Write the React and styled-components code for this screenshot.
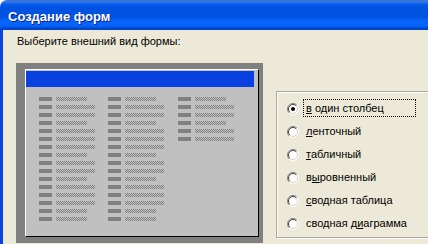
import React from "react";
import styled, { createGlobalStyle } from "styled-components";

const GlobalStyle = createGlobalStyle`
  html, body {
    margin: 0;
    padding: 0;
    background: #fff;
  }
  body {
    font-family: "Liberation Sans", Arial, sans-serif;
  }
`;

const Window = styled.div`
  width: 428px;
  height: 244px;
  overflow: hidden;
  display: flex;
  flex-direction: column;
  background: #ece9d8;
  border-top-left-radius: 7px;
`;

const TitleBar = styled.div`
  flex: none;
  height: 30px;
  box-sizing: border-box;
  padding: 3px 0 0 8px;
  display: flex;
  align-items: center;
  background: linear-gradient(
    to bottom,
    #4a70b8 0px,
    #2a7af8 2px,
    #0a5cec 4px,
    #0053e2 7px,
    #0052df 17px,
    #0865fc 21px,
    #0764fa 26px,
    #0049cc 28px,
    #0042c0 30px
  );
  color: #fff;
  font: bold 13px/15px "Liberation Sans", Arial, sans-serif;
  text-shadow: 1px 1px 0 #0a1e8a;
`;

const Body = styled.div`
  flex: 1;
  border-left: 3px solid #0843dc;
  display: flex;
  flex-direction: column;
`;

const Subtitle = styled.div`
  margin: 5px 0 0 14px;
  font-size: 11px;
  line-height: 13px;
  color: #000;
`;

const Main = styled.div`
  display: flex;
  align-items: flex-start;
  margin: 15px 0 0 13px;
`;

const PreviewFrame = styled.div`
  flex: none;
  width: 247px;
  height: 180px;
  box-sizing: border-box;
  padding: 6px 0 0 9px;
  background: #808080;
`;

const PreviewPanel = styled.div`
  width: 234px;
  height: 168px;
  box-sizing: border-box;
  background: #c0c0c0;
  border-top: 1px solid #fff;
  border-left: 1px solid #fff;
  border-right: 1px solid #000;
  border-bottom: 1px solid #000;
  display: flex;
  flex-direction: column;
`;

const FormHeader = styled.div`
  height: 16px;
  margin: 1px 4px 0 0;
  background: #0841e0;
`;

const Columns = styled.div`
  display: flex;
  margin: 10px 0 0 13px;
`;

const Column = styled.div`
  width: ${(p) => p.$w}px;
  display: flex;
  flex-direction: column;
  gap: 4px;
`;

const FieldRow = styled.div`
  display: flex;
  gap: 4px;
  height: 4px;
`;

const FieldLabel = styled.div`
  width: 13px;
  background: #808080;
`;

const Dither = ({ w }) => (
  <svg width={w} height="4" shapeRendering="crispEdges" style={{ display: "block" }}>
    <defs>
      <pattern id="dither" width="2" height="2" patternUnits="userSpaceOnUse">
        <rect x="0" y="0" width="1" height="1" fill="#808080" />
        <rect x="1" y="1" width="1" height="1" fill="#808080" />
      </pattern>
    </defs>
    <rect width={w} height="4" fill="url(#dither)" />
  </svg>
);

const OptionGroup = styled.div`
  flex: none;
  width: 170px;
  height: 147px;
  box-sizing: border-box;
  margin: 28px 0 0 13px;
  padding: 7px 0 0 10px;
  border: 1px solid #aca899;
  box-shadow: inset 1px 1px 0 #fff, 1px 1px 0 #fff;
  display: flex;
  flex-direction: column;
  gap: 5px;
`;

const Option = styled.label`
  display: flex;
  align-items: center;
  height: 18px;
  gap: 4px;
`;

const OptionText = styled.span`
  display: block;
  width: 113px;
  height: 18px;
  box-sizing: border-box;
  padding: 1px 0 0 2px;
  border: 1px dotted ${(p) => (p.$focus ? "#000" : "transparent")};
  font-size: 11px;
  line-height: 15px;
  color: #000;
  white-space: pre;
  u {
    text-decoration: underline;
    text-underline-offset: 1px;
  }
`;

const RadioIcon = ({ checked }) => (
  <svg width="12" height="12" viewBox="0 0 12 12" style={{ flex: "none", marginTop: 2 }}>
    <circle cx="6" cy="6" r="5.5" fill="#fff" />
    <path d="M2.1 9.9 A5.5 5.5 0 0 1 9.9 2.1" stroke="#808080" fill="none" />
    <path d="M9.9 2.1 A5.5 5.5 0 0 1 2.1 9.9" stroke="#fff" fill="none" />
    <path d="M2.8 9.2 A4.5 4.5 0 0 1 9.2 2.8" stroke="#404040" fill="none" />
    <path d="M9.2 2.8 A4.5 4.5 0 0 1 2.8 9.2" stroke="#d4d0c8" fill="none" />
    {checked && <circle cx="6" cy="6" r="2" fill="#000" />}
  </svg>
);

const pattern = [0, 1, 1, 0, 1, 1, 1, 0, 1, 1, 0, 1, 1, 1, 0, 0];

const columns = [
  { w: 69, rows: 16 },
  { w: 70, rows: 16 },
  { w: 60, rows: 6 },
];

const options = [
  { pre: "", key: "в", post: " один столбец", checked: true },
  { pre: "", key: "л", post: "енточный" },
  { pre: "", key: "т", post: "абличный" },
  { pre: "в", key: "ы", post: "ровненный" },
  { pre: "", key: "с", post: "водная таблица" },
  { pre: "сводная д", key: "и", post: "аграмма" },
];

export default function App() {
  return (
    <>
      <GlobalStyle />
      <Window>
        <TitleBar>Создание форм</TitleBar>
        <Body>
          <Subtitle>Выберите внешний вид формы:</Subtitle>
          <Main>
            <PreviewFrame>
              <PreviewPanel>
                <FormHeader />
                <Columns>
                  {columns.map((col, ci) => (
                    <Column key={ci} $w={col.w}>
                      {pattern.slice(0, col.rows).map((long, ri) => (
                        <FieldRow key={ri}>
                          <FieldLabel />
                          <Dither w={long ? 39 : 31} />
                        </FieldRow>
                      ))}
                    </Column>
                  ))}
                </Columns>
              </PreviewPanel>
            </PreviewFrame>
            <OptionGroup>
              {options.map((o, i) => (
                <Option key={i}>
                  <RadioIcon checked={o.checked} />
                  <OptionText $focus={o.checked}>
                    {o.pre}
                    <u>{o.key}</u>
                    {o.post}
                  </OptionText>
                </Option>
              ))}
            </OptionGroup>
          </Main>
        </Body>
      </Window>
    </>
  );
}
